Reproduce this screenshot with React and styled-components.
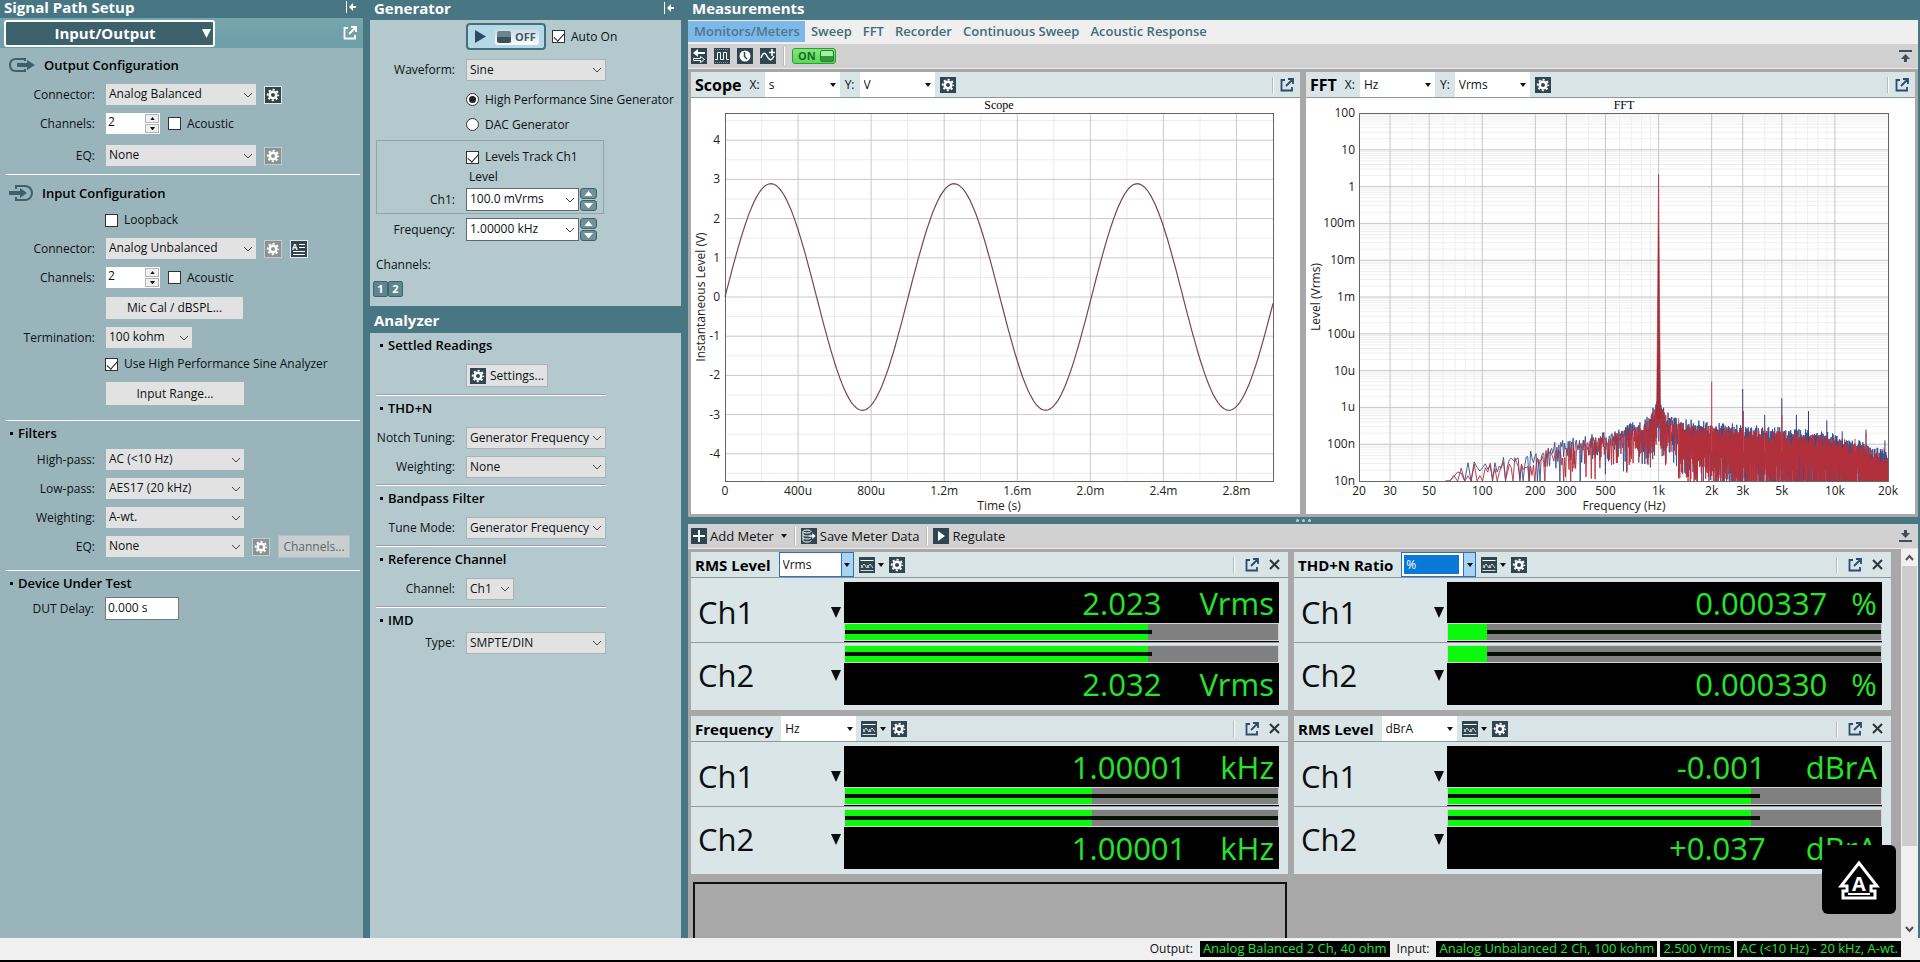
import { useId } from "react";
import styled, { createGlobalStyle, css } from "styled-components";

const GlobalStyle = createGlobalStyle`
  * {
    box-sizing: border-box;
  }
  body {
    margin: 0;
    background: #000;
    color: #0b1214;
    font-family: "Open Sans", "Noto Sans", sans-serif;
    font-size: 12px;
    line-height: 16px;
  }
  button, input, select {
    font: inherit;
    color: inherit;
    margin: 0;
  }
  svg {
    display: block;
    flex-shrink: 0;
  }
  h1, h2, h3 {
    margin: 0;
  }
`;

/* ---------- shell ---------- */

const AppStyled = styled.div`
  display: flex;
  flex-direction: column;
  height: 100vh;
  min-height: 760px;
  border-bottom: 2px solid #000;
`;

const Workspace = styled.main`
  flex: 1;
  min-height: 0;
  display: grid;
  grid-template-columns: 363px 311px minmax(0, 1fr);
  gap: 7px;
  padding-right: 2px;
  background: #487682;
`;

const Column = styled.section`
  display: flex;
  flex-direction: column;
  min-width: 0;
  min-height: 0;
`;

const PanelTitle = styled.header`
  display: flex;
  align-items: center;
  justify-content: space-between;
  height: ${(p) => p.$height}px;
  padding: 0 6px 4px 4px;
  color: #fff;
  flex-shrink: 0;
  h2 {
    font-size: 15px;
    line-height: 14px;
    font-weight: 700;
  }
`;

const PanelBody = styled.div`
  background: ${(p) => (p.$tone === "dark" ? "#9ab4bc" : "#b3c9ce")};
  flex: ${(p) => (p.$fill ? 1 : "none")};
  height: ${(p) => (p.$height ? `${p.$height}px` : "auto")};
  min-height: 0;
  padding: ${(p) => (p.$tone === "dark" ? "0 3px 0 6px" : "0 6px")};
`;

const SelectorBar = styled.div`
  display: flex;
  align-items: center;
  justify-content: space-between;
  height: 30px;
  padding: 0 6px 0 4px;
  color: #fff;
  background: linear-gradient(#76a5ad, #6c9fa8);
  flex-shrink: 0;
`;

const PathButton = styled.button`
  display: flex;
  align-items: center;
  width: 211px;
  height: 27px;
  padding: 0 2px;
  border: 2px solid #fff;
  border-radius: 3px;
  background: #3d616a;
  color: #fff;
  font-size: 15px;
  font-weight: 700;
  span {
    flex: 1;
    text-align: center;
  }
`;

/* ---------- form parts ---------- */

const Heading = styled.h3`
  display: flex;
  align-items: center;
  gap: ${(p) => (p.$bullet ? 5 : 9)}px;
  height: ${(p) => p.$height || 24}px;
  padding-left: ${(p) => (p.$bullet ? 4 : 3)}px;
  font-size: 13px;
  font-weight: 600;
  color: #000;
  &::before {
    content: "";
    display: ${(p) => (p.$bullet ? "block" : "none")};
    width: 3px;
    height: 3px;
    background: #04080a;
  }
`;

const Divider = styled.hr`
  width: ${(p) => (p.$width ? `${p.$width}px` : "auto")};
  height: ${(p) => (p.$width ? 2 : 1)}px;
  margin: ${(p) => p.$gap}px 0 0;
  border: 0;
  border-top: ${(p) => (p.$width ? "1px solid #9a9fae" : "0")};
  background: #fff;
`;

const Row = styled.div`
  display: flex;
  align-items: center;
  height: ${(p) => p.$height || 21}px;
  margin-top: ${(p) => p.$gap || 0}px;
  gap: ${(p) => p.$space || 8}px;
`;

const RowLabel = styled.label`
  width: ${(p) => p.$width}px;
  margin-right: 3px;
  text-align: right;
  white-space: nowrap;
  flex-shrink: 0;
`;

const SelectBox = styled.span`
  display: grid;
  align-items: center;
  width: ${(p) => p.$width}px;
  height: ${(p) => p.$height || 21}px;
  flex-shrink: 0;
  background: ${(p) => (p.$white ? "#fff" : "#e2e2e2")};
  border: ${(p) => (p.$edge ? `1px solid ${p.$edge}` : "0")};
  select {
    grid-area: 1 / 1;
    width: 100%;
    height: 100%;
    padding: 0 3px 1px;
    border: 0;
    appearance: none;
    background: transparent;
    outline: 0;
  }
  svg {
    grid-area: 1 / 1;
    justify-self: end;
    margin-right: 2px;
    pointer-events: none;
  }
`;

const CheckLabel = styled.label`
  display: flex;
  align-items: center;
  gap: 6px;
  white-space: nowrap;
  input {
    appearance: none;
    position: relative;
    width: 13px;
    height: 13px;
    border: 1px solid #2b3438;
    background: #fff;
    border-radius: ${(p) => (p.$radio ? "50%" : 0)};
  }
  input:checked::after {
    content: "";
    position: absolute;
    ${(p) =>
      p.$radio
        ? css`
            inset: 2px;
            border-radius: 50%;
            background: #222;
          `
        : css`
            left: 3px;
            top: 0;
            width: 5px;
            height: 9px;
            border: solid #222;
            border-width: 0 1px 1px 0;
            transform: rotate(42deg);
          `}
  }
`;

const PushButton = styled.button`
  display: flex;
  align-items: center;
  justify-content: center;
  gap: 4px;
  width: ${(p) => p.$width}px;
  height: ${(p) => p.$height || 22}px;
  padding: 0 2px;
  border: ${(p) => (p.$edge ? "1px solid #a9b3b6" : "0")};
  background: #e2e2e2;
  white-space: nowrap;
  &:disabled {
    background: #c9cfd1;
    color: #5d676b;
    border: 1px solid #b5bfc2;
  }
`;

const IconButton = styled.button`
  display: grid;
  place-items: center;
  padding: ${(p) => (p.$framed ? 1 : 0)}px;
  border: 0;
  background: ${(p) => (p.$framed ? "#e4e8e9" : "transparent")};
  color: inherit;
  flex-shrink: 0;
  &:disabled {
    background: ${(p) => (p.$framed ? "#c6cbcc" : "transparent")};
  }
`;

const NumberBox = styled.span`
  display: flex;
  align-items: center;
  width: 54px;
  height: 21px;
  padding: 1px;
  background: #fff;
  input {
    width: 38px;
    padding: 0 0 3px 1px;
    border: 0;
    background: none;
    outline: 0;
  }
`;

const StepColumn = styled.span`
  display: flex;
  flex-direction: column;
  gap: 1px;
`;

const StepButton = styled.button`
  display: grid;
  place-items: center;
  width: 14px;
  height: 9px;
  padding: 0;
  border: 1px solid #b4b4b4;
  background: #f0f0f0;
`;

const LevelStep = styled(StepButton)`
  width: 17px;
  height: 11px;
  border: 1px solid #3f6069;
  border-radius: 3px;
  background: #6f919a;
  color: #fff;
`;

const DelayInput = styled.input`
  width: 74px;
  height: 23px;
  padding: 0 2px 2px;
  border: 1px solid #6d7a7f;
  background: #fff;
`;

const Spacer = styled.span`
  width: ${(p) => p.$width}px;
  flex-shrink: 0;
`;

/* ---------- generator ---------- */

const GeneratorSwitch = styled.button`
  display: flex;
  align-items: center;
  gap: 9px;
  width: 80px;
  height: 27px;
  padding: 0 5px 0 7px;
  border: 2px solid #44707d;
  border-radius: 4px;
  background: #b5d9e6;
  color: #3f5b66;
  font-weight: 700;
  span {
    display: flex;
    align-items: center;
    gap: 4px;
    flex: 1;
    height: 16px;
    padding-left: 2px;
    border-radius: 3px;
    background: linear-gradient(#c5dce4, #fff);
    font-size: 11px;
  }
  i {
    width: 14px;
    height: 12px;
    border-radius: 2px;
    background: linear-gradient(#6c858f 50%, #3c535e 50%);
  }
`;

const TrackGroup = styled.fieldset`
  width: 228px;
  height: 74px;
  margin: 3px 0 0;
  padding: 7px 0 0;
  border: 1px solid #8fa5aa;
  & > div {
    margin-left: -1px;
  }
`;

const LevelCaption = styled.div`
  padding-left: 93px;
  line-height: 22px;
`;

const ChannelsCaption = styled.div`
  margin: 16px 0 8px;
`;

const ChannelTabs = styled.div`
  display: flex;
  margin-left: -3px;
  button {
    width: 15px;
    height: 16px;
    padding: 0;
    border: 1px solid #41636c;
    border-radius: 2px;
    background: #5f868f;
    color: #fff;
    font-size: 11px;
    font-weight: 700;
    line-height: 12px;
  }
`;

const AnalyzerTitle = styled.h2`
  padding-top: 4px;
`;

const StepSlot = styled.span`
  margin-left: -7px;
`;

/* ---------- measurements ---------- */

const Tabs = styled.nav`
  display: flex;
  align-items: flex-start;
  height: 24px;
  padding-top: 1px;
  background: #efefef;
  flex-shrink: 0;
`;

const Tab = styled.a`
  height: 21px;
  padding: 0 5px 0 6px;
  font-size: 13px;
  line-height: 21px;
  font-weight: 600;
  color: ${(p) => (p.$active ? "#4f7689" : "#3f6b77")};
  background: ${(p) => (p.$active ? "#7db8ea" : "transparent")};
  text-decoration: none;
  white-space: nowrap;
`;

const Toolbar = styled.div`
  display: flex;
  align-items: center;
  height: 25px;
  gap: ${(p) => p.$space || 3}px;
  padding: 0 6px 0 3px;
  background: #d1d1d1;
  border-bottom: 1px solid #e8e8e8;
  color: #3f4d5c;
  flex-shrink: 0;
`;

const ToolButton = styled.button`
  display: flex;
  align-items: center;
  gap: 3px;
  padding: 0;
  border: 0;
  background: none;
  color: #111;
  font-size: 13px;
  white-space: nowrap;
`;

const Separator = styled.span`
  width: 2px;
  height: ${(p) => p.$height || 16}px;
  margin: ${(p) => (p.$tight ? 0 : "0 2px 0 4px")};
  border-left: 1px solid #b4bcbe;
  background: #fff;
`;

const PushRight = styled.span`
  margin-left: auto;
`;

const OnButton = styled.button`
  display: flex;
  align-items: center;
  justify-content: space-between;
  width: 44px;
  height: 16px;
  padding: 0 1px 0 5px;
  border: 1px solid #2f9c33;
  border-radius: 3px;
  background: linear-gradient(#7be97a, #59d95a);
  color: #1f6a2b;
  font-size: 11px;
  font-weight: 700;
  i {
    width: 14px;
    height: 12px;
    border-radius: 2px;
    border: 1px solid #2c7d34;
    background: linear-gradient(#a5efa0 50%, #2f9a3a 50%);
  }
`;

const Graphs = styled.div`
  display: grid;
  grid-template-columns: repeat(2, minmax(0, 1fr));
  gap: 6px;
  padding: 3px;
  background: #a8a8a8;
  flex-shrink: 0;
`;

const Card = styled.article`
  background: ${(p) => (p.$graph ? "#fff" : "#dae5e7")};
  min-width: 0;
`;

const CardHeader = styled.header`
  display: flex;
  align-items: center;
  height: 26px;
  padding: 0 ${(p) => (p.$graph ? 6 : 8)}px 0 4px;
  gap: 5px;
  background: #d8e4e5;
  border-bottom: 1px solid #8e989a;
  h3 {
    margin-right: 3px;
    font-size: ${(p) => (p.$graph ? 16 : 15)}px;
    font-weight: 700;
    white-space: nowrap;
    color: #000;
  }
`;

const CornerTools = styled.span`
  display: flex;
  align-items: center;
  gap: ${(p) => p.$space || 4}px;
  margin-left: auto;
  color: #2d4a72;
`;

const PlotSvg = styled.svg`
  width: 100%;
  height: auto;
  .tick {
    font-size: 12px;
    fill: #222;
  }
  .name {
    font-family: "Liberation Serif", serif;
    font-size: 12px;
    fill: #000;
  }
`;

const Splitter = styled.div`
  display: flex;
  align-items: center;
  justify-content: center;
  gap: 3px;
  height: 7px;
  flex-shrink: 0;
  i {
    width: 3px;
    height: 3px;
    border-radius: 50%;
    background: #b9d3da;
  }
`;

const MeterPane = styled.div`
  flex: 1;
  min-height: 0;
  display: grid;
  grid-template-columns: minmax(0, 1fr) 17px;
  background: #a8a8a8;
`;

const MeterGrid = styled.div`
  display: grid;
  grid-template-columns: repeat(2, minmax(0, 1fr));
  grid-template-rows: 158px 158px minmax(0, 1fr);
  gap: 6px;
  padding: 3px 10px 0 3px;
  min-height: 0;
`;

const EmptySlot = styled.div`
  margin: 2px 1px 0 2px;
  border: 2px solid #111;
  border-bottom: 0;
`;

const ChannelRow = styled.div`
  display: grid;
  grid-template-columns: 153px minmax(0, 1fr);
  height: ${(p) => (p.$below ? 62 : 65)}px;
  padding: ${(p) => (p.$below ? "2px 0 0" : "4px 0 0")};
  margin: 0 9px 0 0;
  border-bottom: ${(p) => (p.$below ? "0" : "1px solid #8f9c9f")};
`;

const ChannelName = styled.div`
  display: flex;
  align-items: center;
  justify-content: space-between;
  padding: 0 3px 0 7px;
  font-size: 31px;
  line-height: 40px;
  color: #0b0d0e;
`;

const Readout = styled.div`
  display: flex;
  flex-direction: ${(p) => (p.$below ? "column-reverse" : "column")};
  background: #000;
`;

const Digits = styled.div`
  flex: 1;
  display: flex;
  align-items: center;
  justify-content: flex-end;
  gap: ${(p) => p.$space}px;
  padding-right: 5px;
  font-size: 31px;
  line-height: 40px;
  color: #25e52b;
  white-space: pre;
`;

const LevelBar = styled.div`
  display: grid;
  align-items: center;
  height: 18px;
  margin-bottom: ${(p) => (p.$below ? 0 : 1)}px;
  border: 1px solid #d4d4d4;
  background: #808080;
  & > i {
    grid-area: 1 / 1;
    height: 100%;
    background: #0cf80c;
  }
  & > b {
    grid-area: 1 / 1;
    height: 4px;
    background: #041004;
  }
`;

const UnitBox = styled.span`
  display: flex;
  height: 25px;
  width: 75px;
  background: #fff;
  border: 1px solid ${(p) => (p.$focus ? "#2a72b5" : "#fff")};
  flex-shrink: 0;
  select {
    flex: 1;
    min-width: 0;
    margin: ${(p) => (p.$selected ? "2px 4px 2px 2px" : 0)};
    padding: 0 0 0 ${(p) => (p.$selected ? 2 : 3)}px;
    border: 0;
    appearance: none;
    outline: 0;
    background: ${(p) => (p.$selected ? "#0a78d7" : "transparent")};
    color: ${(p) => (p.$selected ? "#fff" : "#111")};
  }
  span {
    display: grid;
    place-items: center;
    width: 12px;
    color: #111;
    background: ${(p) => (p.$focus ? "#a9d3f3" : "transparent")};
    border-left: 1px solid ${(p) => (p.$focus ? "#2a72b5" : "transparent")};
  }
`;

const Scrollbar = styled.div`
  display: flex;
  flex-direction: column;
  align-items: center;
  justify-content: space-between;
  padding: 5px 0;
  background: #f0f0f0;
  color: #505050;
`;

const Thumb = styled.i`
  flex: 0 1 280px;
  align-self: stretch;
  margin: 4px 1px auto;
  background: #cdcdcd;
`;

const FloatingLogo = styled.button`
  position: fixed;
  right: 24px;
  bottom: 48px;
  display: grid;
  place-items: center;
  width: 74px;
  height: 69px;
  padding: 0;
  border: 0;
  border-radius: 6px;
  background: #000;
`;

const StatusBar = styled.footer`
  display: flex;
  align-items: center;
  justify-content: flex-end;
  gap: 3px;
  height: 22px;
  padding-right: 19px;
  background: #f0f0f0;
  flex-shrink: 0;
  span {
    margin: 0 4px;
  }
  output {
    height: 16px;
    padding: 0 3px;
    background: #000;
    color: #2ae03c;
    font-size: 13px;
    line-height: 15px;
    white-space: nowrap;
  }
`;

/* ---------- icons ---------- */

const Chevron = () => (
  <svg width="12" height="12" viewBox="0 0 12 12" fill="none" stroke="#444">
    <path d="M2 4l4 4 4-4" />
  </svg>
);

const Caret = ({ size = 6, up }) => (
  <svg width={size} height={size / 2 + 1} viewBox="0 0 8 5" preserveAspectRatio="none" fill="currentColor">
    <path d={up ? "M0 5L4 0l4 5z" : "M0 0h8L4 5z"} />
  </svg>
);

const Triangle = ({ size = 10, height = 11 }) => (
  <svg width={size} height={height} viewBox="0 0 10 11" preserveAspectRatio="none" fill="currentColor">
    <path d="M0 0h10L5 11z" />
  </svg>
);

const PlayIcon = () => (
  <svg width="11" height="13" viewBox="0 0 11 13" fill="#294b63">
    <path d="M0 0l11 6.500L0 13z" />
  </svg>
);

const Tile = ({ size = 16, color = "#2f4650", children }) => (
  <svg width={size} height={size} viewBox="0 0 16 16" fill="none" stroke="#fff">
    <path d="M0 0h16v16H0z" fill={color} stroke="none" />
    {children}
  </svg>
);

const GearIcon = ({ muted, size }) => (
  <Tile size={size} color={muted ? "#8b9294" : undefined}>
    <circle cx="8" cy="8" r="3.3" strokeWidth="2.6" />
    <circle cx="8" cy="8" r="5.3" strokeWidth="1.8" strokeDasharray="2.1 2.062" strokeDashoffset="1.05" />
  </Tile>
);

const PopoutIcon = () => (
  <svg width="14" height="14" viewBox="0 0 14 14" fill="none" stroke="currentColor" strokeWidth="1.8">
    <path d="M5 2H1.500v10.500H12V9M8 1h5v5M12.500 1.500L6 8" />
  </svg>
);

const CloseIcon = () => (
  <svg width="11" height="11" viewBox="0 0 11 11" stroke="#26353d" strokeWidth="2">
    <path d="M1 1l9 9M10 1l-9 9" />
  </svg>
);

const CollapseIcon = () => (
  <svg width="12" height="12" viewBox="0 0 12 12" fill="currentColor">
    <path d="M1 0h1v12H1zM4 6l4-4v3h3v2H8v3z" />
  </svg>
);

const DockIcon = ({ down }) => (
  <svg width="13" height="12" viewBox="0 0 13 12" fill="currentColor">
    <path d={down ? "M0 10h13v2H0zM5 0h3v3h3L6.500 8 2 3h3z" : "M0 0h13v2H0zM5 12h3V9h3L6.500 4 2 9h3z"} />
  </svg>
);

const MeterIcon = () => (
  <Tile>
    <path d="M1.500 3.500h13" />
    <path d="M2 11l3-4 3 4 3-4 3 4M2 8l2 3M8 8l2 3" strokeWidth=".8" />
    <path d="M1.500 13.500h13" strokeWidth=".8" />
  </Tile>
);

const OutputIcon = () => (
  <svg width="26" height="16" viewBox="0 0 26 16" fill="none" stroke="#3f606a" strokeWidth="2">
    <path d="M16 4V2H7C3 2 1 4 1 8s2 6 6 6h9v-2" />
    <path d="M8 6h10V3l8 5-8 5v-3H8z" fill="#3f606a" stroke="none" />
  </svg>
);

const InputIcon = () => (
  <svg width="24" height="16" viewBox="0 0 24 16" fill="none" stroke="#3f606a" strokeWidth="2">
    <path d="M7 4V1h9c4 0 7 3 7 7s-3 7-7 7H7v-3" />
    <path d="M0 6h11V3l7 5-7 5v-3H0z" fill="#3f606a" stroke="none" />
  </svg>
);

const LogoIcon = () => (
  <svg width="42" height="42" viewBox="0 0 42 42" fill="none" stroke="#fff" strokeWidth="3">
    <path d="M21 4L3 27h6v5H5v7h32v-7h-4v-5h6z" />
    <text x="21" y="32" textAnchor="middle" fontSize="20" fontWeight="700" fill="#fff" stroke="none">A</text>
    <path d="M10 35h22" strokeWidth="2" />
  </svg>
);

/* ---------- form helpers ---------- */

function Select({ id, value, ...props }) {
  return (
    <SelectBox {...props}>
      <select id={id} defaultValue={value}>
        <option>{value}</option>
      </select>
      <Chevron />
    </SelectBox>
  );
}

function SelectRow({ label, value, width, gap, height, labelWidth = 89, edge, white, children }) {
  const id = useId();
  return (
    <Row $gap={gap} $height={height}>
      <RowLabel $width={labelWidth} htmlFor={id}>
        {label}
      </RowLabel>
      <Select id={id} value={value} $width={width} $height={height} $edge={edge} $white={white} />
      {children}
    </Row>
  );
}

function ChannelCountRow({ gap }) {
  const id = useId();
  return (
    <Row $gap={gap}>
      <RowLabel $width={89} htmlFor={id}>
        Channels:
      </RowLabel>
      <NumberBox>
        <input id={id} defaultValue="2" />
        <StepColumn>
          <StepButton aria-label="More channels"><Caret size={5} up /></StepButton>
          <StepButton aria-label="Fewer channels"><Caret size={5} /></StepButton>
        </StepColumn>
      </NumberBox>
      <Check label="Acoustic" />
    </Row>
  );
}

function Check({ label, checked, radio, name }) {
  return (
    <CheckLabel $radio={radio}>
      <input type={radio ? "radio" : "checkbox"} name={name} defaultChecked={checked} />
      {label}
    </CheckLabel>
  );
}

function Gear({ disabled }) {
  return (
    <IconButton $framed disabled={disabled} aria-label="Settings">
      <GearIcon muted={disabled} />
    </IconButton>
  );
}

function LevelSteps() {
  return (
    <StepSlot>
      <StepColumn>
        <LevelStep aria-label="Increase"><Caret size={9} up /></LevelStep>
        <LevelStep aria-label="Decrease"><Caret size={9} /></LevelStep>
      </StepColumn>
    </StepSlot>
  );
}

/* ---------- left columns ---------- */

function SignalPath() {
  const delayId = useId();
  return (
    <Column>
      <PanelTitle $height={18}>
        <h2>Signal Path Setup</h2>
        <CollapseIcon />
      </PanelTitle>
      <SelectorBar>
        <PathButton>
          <span>Input/Output</span>
          <Triangle size={9} height={9} />
        </PathButton>
        <IconButton aria-label="Open in window"><PopoutIcon /></IconButton>
      </SelectorBar>
      <PanelBody $tone="dark" $fill>
        <Heading $height={34}>
          <OutputIcon />
          Output Configuration
        </Heading>
        <SelectRow label="Connector:" value="Analog Balanced" width={150} gap={2}>
          <Gear />
        </SelectRow>
        <ChannelCountRow gap={8} />
        <SelectRow label="EQ:" value="None" width={150} gap={11}>
          <Gear disabled />
        </SelectRow>
        <Divider $gap={8} />
        <Heading $height={36}>
          <InputIcon />
          Input Configuration
        </Heading>
        <Row $height={18}>
          <Spacer $width={91} />
          <Check label="Loopback" />
        </Row>
        <SelectRow label="Connector:" value="Analog Unbalanced" width={150} gap={9}>
          <Gear disabled />
          <IconButton $framed aria-label="Connector notes">
            <Tile>
              <text x="1" y="9" fontSize="8" fontWeight="700" fill="#fff" stroke="none">A</text>
              <path d="M8 3.500h6M8 6.500h6M2 10.500h12M2 13.500h12" />
            </Tile>
          </IconButton>
        </SelectRow>
        <ChannelCountRow gap={8} />
        <Row $gap={9}>
          <Spacer $width={92} />
          <PushButton $width={137}>Mic Cal / dBSPL...</PushButton>
        </Row>
        <SelectRow label="Termination:" value="100 kohm" width={86} gap={9} />
        <Row $gap={7} $height={18}>
          <Spacer $width={91} />
          <Check label="Use High Performance Sine Analyzer" checked />
        </Row>
        <Row $gap={9} $height={23}>
          <Spacer $width={92} />
          <PushButton $width={138} $height={23}>Input Range...</PushButton>
        </Row>
        <Divider $gap={15} />
        <Heading $bullet>Filters</Heading>
        <SelectRow label="High-pass:" value="AC (<10 Hz)" width={138} gap={4} />
        <SelectRow label="Low-pass:" value="AES17 (20 kHz)" width={138} gap={8} />
        <SelectRow label="Weighting:" value="A-wt." width={138} gap={8} />
        <SelectRow label="EQ:" value="None" width={138} gap={8}>
          <Gear disabled />
          <PushButton $width={72} $height={23} disabled>Channels...</PushButton>
        </SelectRow>
        <Divider $gap={13} />
        <Heading $bullet>Device Under Test</Heading>
        <Row $height={23} $gap={2}>
          <RowLabel $width={88} htmlFor={delayId}>DUT Delay:</RowLabel>
          <DelayInput id={delayId} defaultValue="0.000 s" />
        </Row>
      </PanelBody>
    </Column>
  );
}

const formRow = { labelWidth: 79, height: 22, edge: "#a9b3b6" };
const levelRow = { labelWidth: 79, height: 23, edge: "#5d6b70", width: 113, white: true };

function GeneratorColumn() {
  return (
    <Column>
      <PanelTitle $height={20}>
        <h2>Generator</h2>
        <CollapseIcon />
      </PanelTitle>
      <PanelBody $height={286}>
        <Row $height={33} $space={6}>
          <Spacer $width={84} />
          <GeneratorSwitch>
            <PlayIcon />
            <span><i />OFF</span>
          </GeneratorSwitch>
          <Check label="Auto On" checked />
        </Row>
        <SelectRow {...formRow} label="Waveform:" value="Sine" width={140} gap={6} />
        <Row $gap={6} $height={25}>
          <Spacer $width={82} />
          <Check label="High Performance Sine Generator" radio name="gen" checked />
        </Row>
        <Row $height={25}>
          <Spacer $width={82} />
          <Check label="DAC Generator" radio name="gen" />
        </Row>
        <TrackGroup>
          <Row $height={18}>
            <Spacer $width={82} />
            <Check label="Levels Track Ch1" checked />
          </Row>
          <LevelCaption>Level</LevelCaption>
          <SelectRow {...levelRow} label="Ch1:" value="100.0 mVrms">
            <LevelSteps />
          </SelectRow>
        </TrackGroup>
        <SelectRow {...levelRow} label="Frequency:" value="1.00000 kHz" gap={4}>
          <LevelSteps />
        </SelectRow>
        <ChannelsCaption>Channels:</ChannelsCaption>
        <ChannelTabs>
          <button>1</button>
          <button>2</button>
        </ChannelTabs>
      </PanelBody>
      <PanelTitle $height={27}>
        <AnalyzerTitle>Analyzer</AnalyzerTitle>
      </PanelTitle>
      <PanelBody $fill>
        <Heading $bullet>Settled Readings</Heading>
        <Row $gap={7} $height={23}>
          <Spacer $width={82} />
          <PushButton $width={82} $height={23} $edge>
            <GearIcon />
            Settings...
          </PushButton>
        </Row>
        <Divider $gap={7} $width={230} />
        <Heading $bullet>THD+N</Heading>
        <SelectRow {...formRow} label="Notch Tuning:" value="Generator Frequency" width={140} gap={7} />
        <SelectRow {...formRow} label="Weighting:" value="None" width={140} gap={7} />
        <Divider $gap={6} $width={230} />
        <Heading $bullet>Bandpass Filter</Heading>
        <SelectRow {...formRow} label="Tune Mode:" value="Generator Frequency" width={140} gap={7} />
        <Divider $gap={6} $width={230} />
        <Heading $bullet>Reference Channel</Heading>
        <SelectRow {...formRow} label="Channel:" value="Ch1" width={48} gap={7} />
        <Divider $gap={6} $width={230} />
        <Heading $bullet>IMD</Heading>
        <SelectRow {...formRow} label="Type:" value="SMPTE/DIN" width={140} />
      </PanelBody>
    </Column>
  );
}

/* ---------- plots ---------- */

function axis(from, to, step) {
  const out = [];
  for (let v = from; v <= to + step / 100; v += step) out.push(v);
  return out;
}

const SCOPE = { left: 34, right: 582, top: 15, bottom: 383 };

function ScopePlot() {
  const { left, right, top, bottom } = SCOPE;
  const x = (ms) => left + (ms / 3) * (right - left);
  const y = (v) => 199 - v * 39.2;
  const wave = axis(0, 3, 0.01)
    .map((t) => `${x(t).toFixed(1)},${y(2.89 * Math.sin(2 * Math.PI * t * 0.997)).toFixed(1)}`)
    .join(" ");
  const labels = ["0", "400u", "800u", "1.2m", "1.6m", "2.0m", "2.4m", "2.8m"];
  return (
    <PlotSvg viewBox="0 0 609 416" role="img" aria-label="Scope">
      <text className="name" x="308" y="11" textAnchor="middle">Scope</text>
      <g stroke="#ececec">
        {axis(0.2, 2.8, 0.4).map((t) => <path key={t} d={`M${x(t)} ${top}V${bottom}`} />)}
        {axis(-4.5, 4.5, 1).map((v) => <path key={v} d={`M${left} ${y(v)}H${right}`} />)}
      </g>
      <g stroke="#c9c9c9">
        {axis(0.4, 2.8, 0.4).map((t) => <path key={t} d={`M${x(t)} ${top}V${bottom}`} />)}
        {axis(-4, 4, 1).map((v) => <path key={v} d={`M${left} ${y(v)}H${right}`} />)}
      </g>
      <rect x={left + 0.5} y={top + 0.5} width={right - left} height={bottom - top} fill="none" stroke="#666" />
      <polyline points={wave} fill="none" stroke="#7d4350" strokeWidth="1.2" />
      {axis(-4, 4, 1).map((v) => (
        <text key={v} className="tick" x="29" y={y(v) + 4} textAnchor="end">{v}</text>
      ))}
      {labels.map((l, i) => (
        <text key={l} className="tick" x={x(i * 0.4)} y="397" textAnchor="middle">{l}</text>
      ))}
      <text className="tick" x="308" y="412" textAnchor="middle">Time (s)</text>
      <text className="tick" transform="translate(14 199) rotate(-90)" textAnchor="middle">Instantaneous Level (V)</text>
    </PlotSvg>
  );
}

const FFT = { left: 53, right: 582, top: 15, bottom: 383 };
const fx = (f) => FFT.left + (Math.log10(f / 20) / 3) * (FFT.right - FFT.left);
const fy = (db) => FFT.top + ((2 - db) / 10) * (FFT.bottom - FFT.top);

// upper edge of the noise, as [Hz, log10 of level]
const ENVELOPE = [
  [60, -8.2], [75, -7.6], [100, -7.5], [150, -7.35], [200, -7.25], [250, -7.05], [300, -6.95], [400, -6.8],
  [500, -6.75], [600, -6.6], [700, -6.5], [800, -6.5], [900, -6.25], [960, -5.95], [1000, -5.6],
  [1040, -5.95], [1100, -6.2], [1300, -6.4], [2000, -6.5], [4000, -6.6], [7000, -6.7], [10000, -6.8],
  [14000, -7], [20000, -7.3],
];

const HARMONICS = {
  blue: { 3000: -5.5, 4000: -6.2, 5000: -5.75, 6050: -6.2, 7080: -6.1, 9000: -6.35, 11000: -6.65, 15000: -6.6, 19200: -6.9 },
  red: { 2000: -5.3, 3030: -6.1, 4000: -6.5, 5010: -6.2, 1300: -6.3, 13000: -6.85, 15000: -6.7, 19000: -7.1 },
};

function envelopeAt(f) {
  const i = Math.max(1, ENVELOPE.findIndex(([hz]) => hz >= f));
  const [f0, a] = ENVELOPE[i - 1];
  const [f1, b] = ENVELOPE[i];
  return a + ((b - a) * (f - f0)) / (f1 - f0);
}

// alternates peaks close to the envelope with nulls well below it
function noiseTrace(seed, lift) {
  let s = seed;
  const rand = () => {
    s = (s * 1664525 + 1013904223) % 4294967296;
    return s / 4294967296;
  };
  let d = "";
  let f = 62;
  let i = 0;
  while (f < 20000) {
    const near = Math.abs(f - 1000) < 130;
    const dense = f > 1300;
    const r = rand();
    let drop = r * 0.4;
    if (i % 2) {
      if (dense) drop = 0.55 + r * (0.8 + Math.min(1, f / 6000));
      else if (near) drop = 0.3 + r * 1.1;
      else drop = 0.15 + r * r * 1.2;
    }
    const level = Math.max(-8, envelopeAt(f) + lift - drop);
    d += `${d ? "L" : "M"}${fx(f).toFixed(1)} ${fy(level).toFixed(1)}`;
    f = Math.max(f + 3.5, f * 1.0036);
    i += 1;
  }
  return d;
}

const BLUE_TRACE = noiseTrace(11, 0.1);
const RED_TRACE = noiseTrace(7919, 0);

function harmonicPath(set) {
  return Object.entries(set)
    .map(([f, v]) => `M${fx(Number(f)).toFixed(1)} ${fy(v).toFixed(1)}V${fy(-7.2).toFixed(1)}`)
    .join("");
}

function FftPlot() {
  const { left, right, top, bottom } = FFT;
  const majorX = [30, 50, 100, 200, 300, 500, 1000, 2000, 3000, 5000, 10000];
  const minorX = [40, 60, 70, 80, 90, 400, 600, 700, 800, 900, 4000, 6000, 7000, 8000, 9000];
  const xLabels = { 20: "20", 30: "30", 50: "50", 100: "100", 200: "200", 300: "300", 500: "500", 1000: "1k", 2000: "2k", 3000: "3k", 5000: "5k", 10000: "10k", 20000: "20k" };
  const yLabels = ["100", "10", "1", "100m", "10m", "1m", "100u", "10u", "1u", "100n", "10n"];
  const minorY = axis(-8, 1, 1).flatMap((d) => [2, 3, 4, 5, 6, 7, 8, 9].map((m) => d + Math.log10(m)));
  return (
    <PlotSvg viewBox="0 0 609 416" role="img" aria-label="FFT">
      <text className="name" x="318" y="11" textAnchor="middle">FFT</text>
      <g stroke="#efefef">
        {minorX.map((f) => <path key={f} d={`M${fx(f)} ${top}V${bottom}`} />)}
        {minorY.map((v) => <path key={v} d={`M${left} ${fy(v)}H${right}`} />)}
      </g>
      <g stroke="#c6c6c6">
        {majorX.map((f) => <path key={f} d={`M${fx(f)} ${top}V${bottom}`} />)}
        {axis(-7, 1, 1).map((v) => <path key={v} d={`M${left} ${fy(v)}H${right}`} />)}
      </g>
      <g fill="none" strokeLinejoin="bevel">
        <path d={BLUE_TRACE} stroke="#35508f" strokeWidth=".9" />
        <path d={harmonicPath(HARMONICS.blue)} stroke="#3b3a78" />
        <path d={RED_TRACE} stroke="#b3303b" strokeWidth=".9" />
        <path d={harmonicPath(HARMONICS.red)} stroke="#c2404c" />
      </g>
      <path d={`M${fx(1000)} ${fy(0.34)}l1 130 1 ${fy(-6.3) - fy(0.34) - 130}h-4l1 ${130 + fy(0.34) - fy(-6.3)}z`} fill="#a32b3a" stroke="#a32b3a" strokeWidth=".6" />
      <rect x={left + 0.5} y={top + 0.5} width={right - left} height={bottom - top} fill="none" stroke="#666" />
      {yLabels.map((l, i) => (
        <text key={l} className="tick" x="49" y={fy(2 - i) + 4} textAnchor="end">{l}</text>
      ))}
      {Object.entries(xLabels).map(([f, l]) => (
        <text key={f} className="tick" x={fx(Number(f))} y="397" textAnchor="middle">{l}</text>
      ))}
      <text className="tick" x="318" y="412" textAnchor="middle">Frequency (Hz)</text>
      <text className="tick" transform="translate(14 199) rotate(-90)" textAnchor="middle">Level (Vrms)</text>
    </PlotSvg>
  );
}

/* ---------- measurement cards ---------- */

function UnitSelect({ label, value, focus, selected }) {
  return (
    <UnitBox $focus={focus} $selected={selected}>
      <select aria-label={label} defaultValue={value}>
        <option>{value}</option>
      </select>
      <span><Caret size={6} /></span>
    </UnitBox>
  );
}

function GraphCard({ title, x, y, children }) {
  return (
    <Card $graph>
      <CardHeader $graph>
        <h3>{title}</h3>
        <span>X:</span>
        <UnitSelect label={`${title} X unit`} value={x} />
        <span>Y:</span>
        <UnitSelect label={`${title} Y unit`} value={y} />
        <IconButton aria-label="Graph settings"><GearIcon /></IconButton>
        <CornerTools>
          <Separator />
          <IconButton aria-label="Open in window"><PopoutIcon /></IconButton>
        </CornerTools>
      </CardHeader>
      {children}
    </Card>
  );
}

const METERS = [
  { title: "RMS Level", unit: "Vrms", focus: true, space: 38, values: ["2.023", "2.032"], suffix: "Vrms", fill: 70, line: [0, 71] },
  { title: "THD+N Ratio", unit: "%", focus: true, selected: true, space: 24, values: ["0.000337", "0.000330"], suffix: "%", fill: 9, line: [9, 100] },
  { title: "Frequency", unit: "Hz", space: 34, values: ["1.00001", "1.00001"], suffix: "kHz", fill: 57, line: [0, 100] },
  { title: "RMS Level", unit: "dBrA", space: 40, values: ["-0.001", "+0.037"], suffix: "dBrA", fill: 70, line: [0, 72] },
];

function MeterCard({ meter }) {
  const { title, unit, focus, selected, space, values, suffix, fill, line } = meter;
  return (
    <Card>
      <CardHeader>
        <h3>{title}</h3>
        <UnitSelect label={`${title} unit`} value={unit} focus={focus} selected={selected} />
        <ToolButton aria-label="Meter view"><MeterIcon /><Caret size={6} /></ToolButton>
        <IconButton aria-label="Meter settings"><GearIcon /></IconButton>
        <CornerTools $space={10}>
          <Separator $tight />
          <IconButton aria-label="Open in window"><PopoutIcon /></IconButton>
          <IconButton aria-label="Close meter"><CloseIcon /></IconButton>
        </CornerTools>
      </CardHeader>
      {values.map((value, i) => (
        <ChannelRow key={i} $below={i === 1}>
          <ChannelName>
            Ch{i + 1}
            <Triangle />
          </ChannelName>
          <Readout $below={i === 1}>
            <Digits $space={space}>
              <span>{value}</span>
              <span>{suffix}</span>
            </Digits>
            <LevelBar $below={i === 1}>
              <i style={{ width: `${fill}%` }} />
              <b style={{ marginLeft: `${line[0]}%`, width: `${line[1] - line[0]}%` }} />
            </LevelBar>
          </Readout>
        </ChannelRow>
      ))}
    </Card>
  );
}

function Measurements() {
  const tabs = ["Monitors/Meters", "Sweep", "FFT", "Recorder", "Continuous Sweep", "Acoustic Response"];
  return (
    <Column>
      <PanelTitle $height={20}>
        <h2>Measurements</h2>
      </PanelTitle>
      <Tabs>
        {tabs.map((tab, i) => (
          <Tab key={tab} href="#" $active={i === 0}>{tab}</Tab>
        ))}
      </Tabs>
      <Toolbar $space={7}>
        <IconButton aria-label="Swap"><Tile>
          <path d="M14 5H6" strokeWidth="2" />
          <path d="M7 1v8L2 5z" fill="#fff" stroke="none" />
          <path d="M2.500 10.500h7V8.500l4 3-4 3v-2h-7z" />
        </Tile></IconButton>
        <IconButton aria-label="Digital monitor"><Tile>
          <path d="M1 11.500h2.500v-7h3v7h3v-7h3v7H15" />
          <path d="M1 1.500h14M1 14.500h14" stroke="#7f929c" strokeDasharray="1 1" />
        </Tile></IconButton>
        <IconButton aria-label="Timer"><Tile>
          <circle cx="8" cy="8" r="5.500" fill="#fff" stroke="none" />
          <path d="M7.500 4v4.500L10 11" stroke="#2f4650" strokeWidth="1.500" />
        </Tile></IconButton>
        <IconButton aria-label="Add waveform"><Tile>
          <path d="M1 10c2-6 4-6 6-2s4 6 7 0" strokeWidth="1.400" />
          <path d="M12 1v7M9 4.500h6" strokeWidth="1.600" />
        </Tile></IconButton>
        <Separator $height={18} $tight />
        <OnButton>ON<i /></OnButton>
        <PushRight><DockIcon /></PushRight>
      </Toolbar>
      <Graphs>
        <GraphCard title="Scope" x="s" y="V"><ScopePlot /></GraphCard>
        <GraphCard title="FFT" x="Hz" y="Vrms"><FftPlot /></GraphCard>
      </Graphs>
      <Splitter><i /><i /><i /></Splitter>
      <Toolbar>
        <ToolButton>
          <Tile><path d="M8 2v12M2 8h12" strokeWidth="2" /></Tile>
          Add Meter
          <Spacer $width={1} />
          <Caret size={6} />
        </ToolButton>
        <Separator $height={18} />
        <ToolButton>
          <Tile>
            <ellipse cx="6" cy="3.500" rx="4" ry="1.500" />
            <path d="M2 3.500v9c0 1 2 1.500 4 1.500s4-.5 4-1.500M2 6.500c0 2 8 2 8 0M2 9.500c0 2 8 2 8 0" />
            <path d="M7 7h4V4.500L15 8l-4 3.500V9H7z" fill="#fff" stroke="#2f4650" strokeWidth=".6" />
          </Tile>
          Save Meter Data
        </ToolButton>
        <Separator $height={18} />
        <ToolButton>
          <Tile><path d="M5 3l7 5-7 5z" fill="#fff" stroke="none" /></Tile>
          Regulate
        </ToolButton>
        <PushRight><DockIcon down /></PushRight>
      </Toolbar>
      <MeterPane>
        <MeterGrid>
          {METERS.map((meter) => (
            <MeterCard key={meter.title + meter.unit} meter={meter} />
          ))}
          <EmptySlot />
        </MeterGrid>
        <Scrollbar>
          <svg width="9" height="8" viewBox="0 0 9 8" fill="none" stroke="currentColor" strokeWidth="2"><path d="M1 6l3.500-4L8 6" /></svg>
          <Thumb />
          <svg width="9" height="8" viewBox="0 0 9 8" fill="none" stroke="currentColor" strokeWidth="2"><path d="M1 2l3.500 4L8 2" /></svg>
        </Scrollbar>
      </MeterPane>
    </Column>
  );
}

function App() {
  return (
    <AppStyled>
      <GlobalStyle />
      <Workspace>
        <SignalPath />
        <GeneratorColumn />
        <Measurements />
      </Workspace>
      <StatusBar>
        <span>Output:</span>
        <output>Analog Balanced 2 Ch, 40 ohm</output>
        <span>Input:</span>
        <output>Analog Unbalanced 2 Ch, 100 kohm</output>
        <output>2.500 Vrms</output>
        <output>AC (&lt;10 Hz) - 20 kHz, A-wt.</output>
      </StatusBar>
      <FloatingLogo aria-label="Audio Precision"><LogoIcon /></FloatingLogo>
    </AppStyled>
  );
}

export default App;
